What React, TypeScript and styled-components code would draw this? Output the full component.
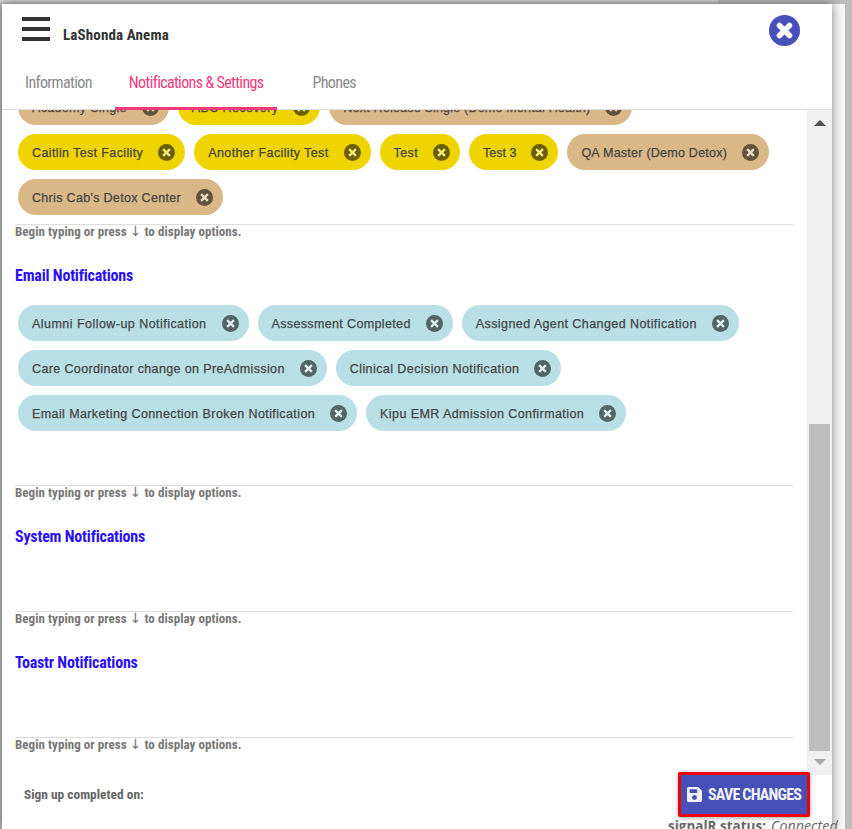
import { createGlobalStyle, styled } from "styled-components";

const GlobalStyle = createGlobalStyle`
    html, body {
        margin: 0;
        height: 100%;
        overflow: hidden;
    }
`;

const condensed = `"Liberation Sans Narrow", "Roboto Condensed", Roboto, sans-serif`;

const chipTones = {
    yellow: { bg: "#efd400", icon: "#6b5f00", mark: "#f7e98c", spacing: 0.38 },
    tan: { bg: "#d9b787", icon: "#61523d", mark: "#ecdcc4", spacing: 0.25 },
    blue: { bg: "#b8dfe6", icon: "#536467", mark: "#dff1f4", spacing: 0.42 },
};

type Tone = keyof typeof chipTones;

const Stage = styled.div`
    position: relative;
    box-sizing: border-box;
    height: 829px;
    padding: 4px 7px 0 2px;
    background: linear-gradient(#dcdcdc, #bdbdbd) no-repeat 0 0 / 718px 4px, #bdbdbd;
    overflow: hidden;
`;

const Sheet = styled.div`
    height: 100%;
    background: #f7f7f7;
`;

const Panel = styled.div`
    display: flex;
    flex-direction: column;
    width: 830px;
    height: 100%;
    background: #fff;
    box-shadow: 0 0 10px rgba(0, 0, 0, 0.5);
`;

const Header = styled.header`
    flex: none;
    height: 106px;
    box-sizing: border-box;
    border-bottom: 1px solid #ddd;
    position: relative;
    z-index: 1;
    background: #fff;
`;

const TitleBar = styled.div`
    display: flex;
    align-items: center;
    height: 52px;
    padding: 0 32px 0 20px;
`;

const Hamburger = styled.svg`
    margin-top: -2px;
`;

const Name = styled.span`
    margin-left: 13px;
    margin-top: 10px;
    font: bold 15px ${condensed};
    letter-spacing: 0.14px;
    color: #333;
`;

const CloseButton = styled.button`
    margin-left: auto;
    padding: 0;
    border: 0;
    background: none;
    line-height: 0;
`;

const Tabs = styled.nav`
    display: flex;
    gap: 9px;
    height: 54px;
    padding-left: 9px;
`;

const Tab = styled.a<{ $active?: boolean; $shift?: number }>`
    box-sizing: border-box;
    height: 54px;
    margin-left: ${(props) => props.$shift ?? 0}px;
    padding: 17px 14px 0;
    font: 16px ${condensed};
    letter-spacing: -0.62px;
    color: ${(props) => (props.$active ? "#ee3a7c" : "#8a8a8a")};
    border-bottom: 3px solid ${(props) => (props.$active ? "#ee3a7c" : "transparent")};
`;

const Body = styled.div`
    flex: none;
    display: flex;
    height: 665px;
`;

const ScrollArea = styled.main`
    flex: 1;
    overflow: hidden;
    padding: 0 14px 0 13px;
`;

const Inner = styled.div`
    margin-top: -21px;
`;

const Heading = styled.h3`
    margin: 26px 0 0;
    height: 20px;
    font: bold 16px/22px ${condensed};
    letter-spacing: -0.2px;
    color: #2a10f5;
`;

const Field = styled.div<{ $trail?: number; $empty?: boolean }>`
    box-sizing: border-box;
    min-height: ${(props) => (props.$empty ? 66 : 0)}px;
    padding-bottom: ${(props) => props.$trail ?? 0}px;
    border-bottom: 1px solid #ddd;
`;

const ChipList = styled.div<{ $top?: number }>`
    display: flex;
    flex-wrap: wrap;
    gap: 9px;
    padding: ${(props) => props.$top ?? 0}px 3px 0;
`;

const Chip = styled.span<{ $tone: Tone; $spacing?: number }>`
    display: inline-flex;
    align-items: center;
    box-sizing: border-box;
    height: 36px;
    padding: 2px 10px 0 14px;
    border-radius: 18px;
    background: ${(props) => chipTones[props.$tone].bg};
    font: 12.5px "Liberation Sans", Arial, sans-serif;
    letter-spacing: ${(props) => props.$spacing ?? chipTones[props.$tone].spacing}px;
    color: #444;
    -webkit-text-stroke: 0.25px #444;
`;

const ChipClose = styled.svg`
    flex: none;
    margin: -2px 0 0 15px;
`;

const Hint = styled.div`
    height: 14px;
    font: bold 13px/14px ${condensed};
    letter-spacing: 0.05px;
    color: #777;
`;

const HintArrow = styled.span`
    font: 14px/0 "DejaVu Sans", sans-serif;
`;

const Scrollbar = styled.aside`
    flex: none;
    display: flex;
    flex-direction: column;
    align-items: center;
    width: 25px;
    background: #f0f0f0;
`;

const UpArrow = styled.div`
    width: 0;
    height: 0;
    margin-top: 10px;
    border-left: 6px solid transparent;
    border-right: 6px solid transparent;
    border-bottom: 6px solid #505050;
`;

const DownArrow = styled.div`
    width: 0;
    height: 0;
    margin-top: 8px;
    border-left: 6px solid transparent;
    border-right: 6px solid transparent;
    border-top: 6px solid #a8a8a8;
`;

const Thumb = styled.div`
    width: 21px;
    height: 327px;
    margin-top: 298px;
    background: #bdbdbd;
`;

const Footer = styled.footer`
    flex: 1;
    display: flex;
    align-items: flex-start;
    justify-content: space-between;
    padding: 0 22px;
    position: relative;
`;

const SignUp = styled.span`
    margin-top: 12px;
    font: bold 13.4px ${condensed};
    color: #666;
`;

const SaveButton = styled.button`
    display: flex;
    align-items: center;
    gap: 6px;
    box-sizing: border-box;
    width: 132px;
    height: 45px;
    margin-top: -3px;
    padding: 0 0 0 6px;
    border: 3px solid #f00000;
    border-radius: 2px;
    background: #4650b8;
    color: #f2f2fa;
    font: bold 16px ${condensed};
    letter-spacing: -0.8px;
    box-shadow: 0 1px 4px rgba(0, 0, 0, 0.35);
`;

const Status = styled.div`
    position: absolute;
    left: 668px;
    top: 816px;
    white-space: nowrap;
    font: 13.5px "Open Sans", sans-serif;
    color: #666;
`;

const StatusLabel = styled.b`
    margin-right: 5px;
`;

const StatusValue = styled.i`
    font-size: 14.3px;
`;

function ChipMark({ tone }: { tone: Tone }) {
    const { icon, mark } = chipTones[tone];
    return (
        <ChipClose width="17" height="17" viewBox="0 0 17 17">
            <circle cx="8.5" cy="8.5" r="8.5" fill={icon} />
            <path d="M5.100 5.100l6.800 6.800M11.900 5.100l-6.800 6.800" stroke={mark} strokeWidth="2.300" />
        </ChipClose>
    );
}

function Tag({ tone, label, spacing }: { tone: Tone; label: string; spacing?: number }) {
    return (
        <Chip $tone={tone} $spacing={spacing}>
            {label}
            <ChipMark tone={tone} />
        </Chip>
    );
}

function FieldHint() {
    return (
        <Hint>
            Begin typing or press <HintArrow>↓</HintArrow> to display options.
        </Hint>
    );
}

const facilities: { tone: Tone; label: string; spacing?: number }[] = [
    { tone: "tan", label: "Academy Single", spacing: 0.32 },
    { tone: "yellow", label: "ABC Recovery" },
    { tone: "tan", label: "Next Release Single (Demo Mental Health)", spacing: 0.2 },
    { tone: "yellow", label: "Caitlin Test Facility" },
    { tone: "yellow", label: "Another Facility Test" },
    { tone: "yellow", label: "Test" },
    { tone: "yellow", label: "Test 3", spacing: 0 },
    { tone: "tan", label: "QA Master (Demo Detox)" },
    { tone: "tan", label: "Chris Cab's Detox Center", spacing: 0.32 },
];

const emails: { label: string; spacing?: number }[] = [
    { label: "Alumni Follow-up Notification", spacing: 0.46 },
    { label: "Assessment Completed", spacing: 0.36 },
    { label: "Assigned Agent Changed Notification" },
    { label: "Care Coordinator change on PreAdmission", spacing: 0.37 },
    { label: "Clinical Decision Notification" },
    { label: "Email Marketing Connection Broken Notification", spacing: 0.4 },
    { label: "Kipu EMR Admission Confirmation" },
];

function App() {
    return (
        <Stage>
            <GlobalStyle />
            <Sheet>
                <Panel>
                    <Header>
                        <TitleBar>
                            <Hamburger width="28" height="24" viewBox="0 0 28 24">
                                <rect y="0" width="28" height="4" fill="#333" />
                                <rect y="10" width="28" height="4" fill="#333" />
                                <rect y="20" width="28" height="4" fill="#333" />
                            </Hamburger>
                            <Name>LaShonda Anema</Name>
                            <CloseButton>
                                <svg width="31" height="31" viewBox="0 0 31 31">
                                    <circle cx="15.5" cy="15.5" r="15.5" fill="#4650b8" />
                                    <path d="M10.500 10.500l10 10M20.500 10.500l-10 10" stroke="#fff" strokeWidth="5.500" strokeLinecap="round" />
                                </svg>
                            </CloseButton>
                        </TitleBar>
                        <Tabs>
                            <Tab>Information</Tab>
                            <Tab $active>Notifications &amp; Settings</Tab>
                            <Tab $shift={12}>Phones</Tab>
                        </Tabs>
                    </Header>
                    <Body>
                        <ScrollArea>
                            <Inner>
                                <Field $trail={9}>
                                    <ChipList>
                                        {facilities.map((chip) => (
                                            <Tag key={chip.label} {...chip} />
                                        ))}
                                    </ChipList>
                                </Field>
                                <FieldHint />
                                <Heading>Email Notifications</Heading>
                                <Field $trail={54}>
                                    <ChipList $top={20}>
                                        {emails.map((chip) => (
                                            <Tag key={chip.label} tone="blue" {...chip} />
                                        ))}
                                    </ChipList>
                                </Field>
                                <FieldHint />
                                <Heading>System Notifications</Heading>
                                <Field $empty />
                                <FieldHint />
                                <Heading>Toastr Notifications</Heading>
                                <Field $empty />
                                <FieldHint />
                            </Inner>
                        </ScrollArea>
                        <Scrollbar>
                            <UpArrow />
                            <Thumb />
                            <DownArrow />
                        </Scrollbar>
                    </Body>
                    <Footer>
                        <SignUp>Sign up completed on:</SignUp>
                        <SaveButton>
                            <svg width="15" height="15" viewBox="0 0 14 14">
                                <path fillRule="evenodd" d="M1.500 0H10.500L14 3.500V12.500A1.500 1.500 0 0 1 12.500 14H1.500A1.500 1.500 0 0 1 0 12.500V1.500A1.500 1.500 0 0 1 1.500 0ZM2.500 2V5.500H9.500V2ZM7 7.500A2.300 2.300 0 1 0 7 12.100A2.300 2.300 0 1 0 7 7.500Z" fill="#f2f2fa" />
                            </svg>
                            SAVE CHANGES
                        </SaveButton>
                    </Footer>
                </Panel>
            </Sheet>
            <Status>
                <StatusLabel>signalR status:</StatusLabel>
                <StatusValue>Connected</StatusValue>
            </Status>
        </Stage>
    );
}

export default App;
